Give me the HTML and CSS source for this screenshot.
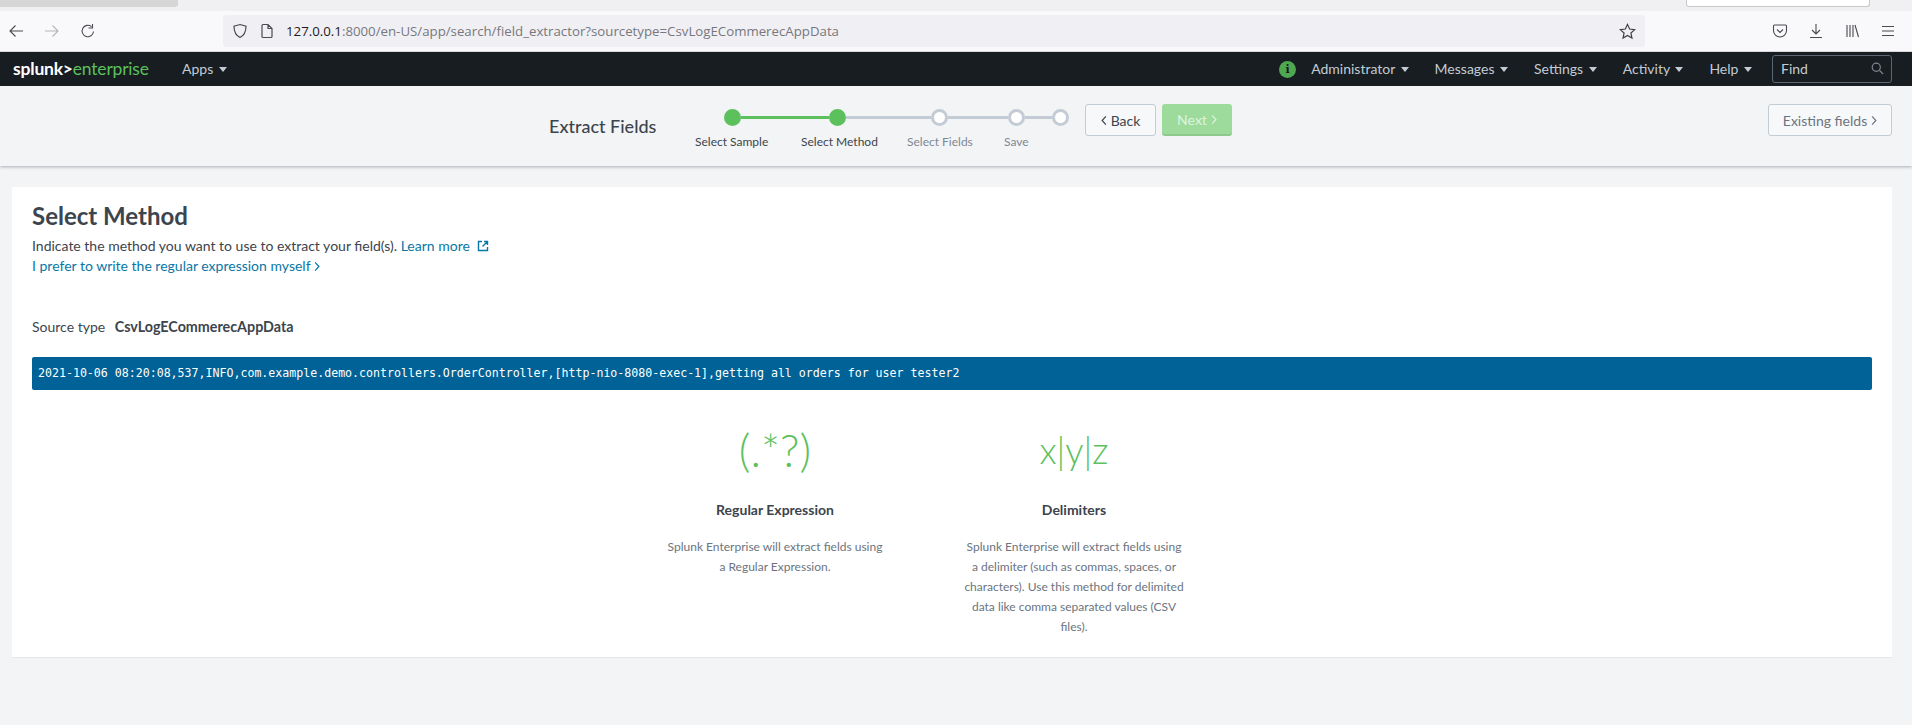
FILE: index.html
```html
<!DOCTYPE html>
<html lang="en">
<head>
    <meta charset="UTF-8">
    <meta name="viewport" content="width=device-width, initial-scale=1.0">
    <title>Extract Fields</title>
    <link rel="stylesheet" href="styles.css">
</head>
<body>
    <div class="tabstrip">
        <div class="tab-thumb"></div>
        <div class="tab-popup"></div>
    </div>
    <div class="toolbar">
        <svg class="tool-icon back" viewBox="0 0 16 16"><path d="M15 8H2M7.5 2.5 2 8l5.500 5.500"/></svg>
        <svg class="tool-icon forward" viewBox="0 0 16 16"><path d="M1 8h13M8.500 2.500 14 8l-5.500 5.500"/></svg>
        <svg class="tool-icon reload" viewBox="0 0 16 16"><path d="M13.500 8.500A5.700 5.700 0 1 1 11.500 3.600M12.500 1v4h-4"/></svg>
        <div class="urlbar">
            <svg class="url-icon" viewBox="0 0 16 16"><path d="M8 1.500 14 3.200c0 5.500-1.500 9-6 11.300C3.500 12.200 2 8.700 2 3.200z"/></svg>
            <svg class="url-icon page" viewBox="0 0 16 16"><path d="M3 2.500c0-.6.400-1 1-1h5l4 4v8c0 .6-.4 1-1 1H4c-.6 0-1-.4-1-1zM9 1.500v4h4"/></svg>
            <span class="url-text"><span class="url-host">127.0.0.1</span>:8000/en-US/app/search/field_extractor?sourcetype=CsvLogECommerecAppData</span>
            <svg class="url-star" viewBox="0 0 16 16"><path d="M8 1.300 10 5.700l4.800.5-3.600 3.200 1 4.800L8 11.800l-4.200 2.400 1-4.800L1.200 6.200 6 5.700z"/></svg>
        </div>
        <div class="tool-right">
            <svg class="tool-icon" viewBox="0 0 16 16"><path d="M2.500 2h11c.6 0 1 .4 1 1v4.500c0 3.500-3 6.500-6.500 6.500s-6.500-3-6.500-6.500V3c0-.6.400-1 1-1zM5 6.500l3 3 3-3"/></svg>
            <svg class="tool-icon" viewBox="0 0 16 16"><path d="M8 1v9.500M4 7l4 4 4-4M2 14.500h12"/></svg>
            <svg class="tool-icon" viewBox="0 0 16 16"><path d="M3 2v12M6 2v12M9 2v12M11 2l3.500 12"/></svg>
            <svg class="tool-icon" viewBox="0 0 16 16"><path d="M2 3.500h12M2 8h12M2 12.500h12"/></svg>
        </div>
    </div>

    <nav class="navbar">
        <div class="logo"><span class="logo-splunk">splunk&gt;</span><span class="logo-product">enterprise</span></div>
        <a class="nav-item nav-apps">Apps <i class="caret"></i></a>
        <div class="nav-right">
            <span class="info-dot">i</span>
            <a class="nav-item">Administrator <i class="caret"></i></a>
            <a class="nav-item">Messages <i class="caret"></i></a>
            <a class="nav-item">Settings <i class="caret"></i></a>
            <a class="nav-item">Activity <i class="caret"></i></a>
            <a class="nav-item">Help <i class="caret"></i></a>
            <div class="find">
                <span>Find</span>
                <svg class="find-icon" viewBox="0 0 16 16"><circle cx="6.500" cy="6.500" r="5"/><path d="M10.500 10.500 15 15"/></svg>
            </div>
        </div>
    </nav>

    <header class="wizard">
        <h1 class="wizard-title">Extract Fields</h1>
        <div class="stepper">
            <div class="step-track">
                <span class="dot done"></span><span class="line done-line l1"></span>
                <span class="dot done"></span><span class="line l2"></span>
                <span class="dot"></span><span class="line l3"></span>
                <span class="dot"></span><span class="line l4"></span>
                <span class="dot"></span>
            </div>
            <div class="step-labels">
                <span class="active s1">Select Sample</span>
                <span class="active s2">Select Method</span>
                <span class="s3">Select Fields</span>
                <span class="s4">Save</span>
            </div>
        </div>
        <button class="btn btn-back"><svg class="chev" viewBox="0 0 8 14"><path d="M6.500 1.500 1.500 7l5 5.500"/></svg> Back</button>
        <button class="btn btn-next">Next <svg class="chev" viewBox="0 0 8 14"><path d="M1.500 1.500 6.500 7l-5 5.500"/></svg></button>
        <button class="btn btn-existing">Existing fields <svg class="chev" viewBox="0 0 8 14"><path d="M1.500 1.500 6.500 7l-5 5.500"/></svg></button>
    </header>

    <main class="card">
        <h2 class="card-title">Select Method</h2>
        <p class="intro">Indicate the method you want to use to extract your field(s). <a>Learn more <svg class="ext" viewBox="0 0 12 12"><path d="M5 1.500H1.500v9h9V7M7 1.500h3.500V5M10.500 1.500 5.500 6.500"/></svg></a></p>
        <p class="intro"><a>I prefer to write the regular expression myself <svg class="chev-link" viewBox="0 0 8 14"><path d="M1.500 1.500 6.500 7l-5 5.500"/></svg></a></p>
        <p class="source">Source type <b>CsvLogECommerecAppData</b></p>
        <div class="sample">2021-10-06 08:20:08,537,INFO,com.example.demo.controllers.OrderController,[http-nio-8080-exec-1],getting all orders for user tester2</div>
        <div class="methods">
            <section class="method">
                <div class="method-icon regex">(.*?)</div>
                <h3>Regular Expression</h3>
                <p>Splunk Enterprise will extract fields using a Regular Expression.</p>
            </section>
            <section class="method">
                <div class="method-icon">x|y|z</div>
                <h3>Delimiters</h3>
                <p>Splunk Enterprise will extract fields using a delimiter (such as commas, spaces, or characters). Use this method for delimited data like comma separated values (CSV files).</p>
            </section>
        </div>
    </main>
</body>
</html>
```

FILE: styles.css
```css
* {
    box-sizing: border-box;
}
html, body {
    height: 725px;
    overflow: hidden;
}
body {
    margin: 0;
    background-color: #f2f4f5;
    font-family: Lato, "Open Sans", sans-serif;
    color: #3c444d;
}
.tabstrip {
    height: 11px;
    background-color: #f0f0f2;
    display: flex;
    justify-content: space-between;
    padding-right: 42px;
}
.tab-thumb {
    width: 178px;
    height: 7px;
    background-color: #d6d6d6;
    border-bottom-right-radius: 3px;
}
.tab-popup {
    width: 184px;
    height: 7px;
    background-color: white;
    border: 1px solid #c8c8c8;
    border-top: none;
    border-radius: 0 0 3px 3px;
}
.toolbar {
    height: 41px;
    background-color: #f9f9fb;
    display: flex;
    align-items: center;
    padding-left: 8px;
    border-bottom: 1px solid #d8d8dc;
}
.tool-icon {
    width: 16px;
    height: 16px;
    fill: none;
    stroke: #4a4a50;
    stroke-width: 1.1;
    flex: none;
}
.forward {
    margin-left: 20px;
    stroke: #b5b5b8;
}
.reload {
    margin-left: 20px;
}
.urlbar {
    margin-left: 127px;
    width: 1422px;
    height: 32px;
    background-color: #f0f0f4;
    border-radius: 4px;
    display: flex;
    align-items: center;
    padding-left: 9px;
    padding-right: 9px;
    font-family: "Open Sans", sans-serif;
    font-size: 13.250px;
}
.url-icon {
    width: 16px;
    height: 16px;
    fill: none;
    stroke: #4a4a50;
    stroke-width: 1.200;
    flex: none;
}
.url-icon.page {
    margin-left: 11px;
}
.url-text {
    margin-left: 11px;
    color: #77777d;
    flex: 1;
    white-space: nowrap;
}
.url-host {
    color: #1c1b22;
}
.url-star {
    width: 17px;
    height: 17px;
    fill: none;
    stroke: #3e3e44;
    stroke-width: 1.100;
    flex: none;
}
.tool-right {
    margin-left: 127px;
    display: flex;
    gap: 20px;
}
.navbar {
    height: 34px;
    background-color: #171d21;
    display: flex;
    align-items: center;
    padding-left: 13px;
    padding-right: 20px;
    font-size: 14px;
}
.logo {
    font-size: 17.500px;
    letter-spacing: -0.200px;
    width: 169px;
    flex: none;
    margin-top: -2px;
}
.logo-splunk {
    color: white;
    font-weight: 700;
}
.logo-product {
    color: #5cc05c;
}
.nav-item {
    color: #c3cbd4;
    white-space: nowrap;
    margin-top: -2px;
}
.caret {
    display: inline-block;
    width: 0;
    height: 0;
    margin-left: 2px;
    vertical-align: 2px;
    border-left: 4px solid transparent;
    border-right: 4px solid transparent;
    border-top: 5px solid #c3cbd4;
}
.nav-right {
    margin-left: auto;
    display: flex;
    align-items: center;
    gap: 26px;
}
.info-dot {
    width: 17px;
    height: 17px;
    border-radius: 50%;
    background-color: #4fa84f;
    color: #12181c;
    font-family: "DejaVu Serif", serif;
    font-weight: 700;
    font-size: 11px;
    line-height: 17px;
    text-align: center;
    margin-right: -11px;
}
.find {
    width: 120px;
    height: 28px;
    border: 1px solid #5c6773;
    border-radius: 3px;
    color: #c3cbd4;
    display: flex;
    align-items: center;
    justify-content: space-between;
    padding: 0 7px 2px 8px;
    margin-left: -6px;
}
.find-icon {
    width: 13px;
    height: 13px;
    fill: none;
    stroke: #7d8791;
    stroke-width: 1.500;
}
.wizard {
    height: 80px;
    background-color: #f2f4f5;
    box-shadow: 0 1px 3px rgba(60, 70, 85, 0.4);
    display: flex;
    align-items: flex-start;
    padding: 18px 20px 0 549px;
    position: relative;
}
.wizard-title {
    margin: 0;
    width: 175px;
    padding-top: 10px;
    font-size: 18px;
    font-weight: 500;
    line-height: 24px;
    color: #3c444d;
    white-space: nowrap;
}
.stepper {
    width: 361px;
    flex: none;
}
.step-track {
    display: flex;
    align-items: center;
    height: 18px;
    margin-top: 4px;
}
.dot {
    width: 17px;
    height: 17px;
    border-radius: 50%;
    background-color: white;
    border: 3px solid #c3cbd4;
    flex: none;
}
.dot.done {
    background-color: #5cc05c;
    border-color: #5cc05c;
}
.line {
    height: 3px;
    background-color: #c3cbd4;
    flex: none;
}
.line.done-line {
    background-color: #5cc05c;
}
.l1 {
    width: 88px;
}
.l2 {
    width: 85px;
}
.l3 {
    width: 60px;
}
.l4 {
    width: 27px;
}
.step-labels {
    display: flex;
    font-size: 12px;
    color: #7e8894;
    margin-top: 8px;
    margin-left: -29px;
    white-space: nowrap;
}
.step-labels .active {
    color: #3c444d;
}
.s1 {
    width: 106px;
}
.s2 {
    width: 106px;
}
.s3 {
    width: 97px;
}
.btn {
    height: 32px;
    border-radius: 3px;
    font-family: inherit;
    font-size: 14px;
    padding: 0;
    flex: none;
    display: flex;
    align-items: center;
    justify-content: center;
    gap: 4px;
    background-color: #f7f8fa;
    border: 1px solid #c3cbd4;
    color: #3c444d;
}
.btn-back {
    width: 71px;
}
.btn-next {
    width: 70px;
    margin-left: 6px;
    background-color: #9ddb9d;
    border: none;
    border-bottom: 2px solid #8dc98d;
    color: #def3de;
}
.btn-existing {
    width: 124px;
    margin-left: auto;
    color: #6b7480;
}
.chev {
    width: 6px;
    height: 11px;
    fill: none;
    stroke: currentColor;
    stroke-width: 1.600;
}
.card {
    margin: 21px 20px 0 12px;
    height: 471px;
    background-color: white;
    padding: 15px 20px 0 20px;
    border-bottom: 1px solid #e4e7ea;
}
.card-title {
    margin: 0 0 6px;
    font-size: 24px;
    line-height: 28px;
    font-weight: 700;
    color: #3c444d;
}
.intro {
    margin: 0;
    font-size: 14px;
    line-height: 20px;
    color: #3c444d;
}
.intro a {
    color: #0877a6;
}
.ext {
    width: 12px;
    height: 12px;
    margin-left: 4px;
    vertical-align: -1px;
    fill: none;
    stroke: #0877a6;
    stroke-width: 1.400;
}
.chev-link {
    width: 6px;
    height: 11px;
    vertical-align: -1px;
    fill: none;
    stroke: #0877a6;
    stroke-width: 1.600;
}
.source {
    margin: 41px 0 0;
    font-size: 14px;
    line-height: 20px;
}
.source b {
    margin-left: 6px;
    font-size: 14.300px;
}
.sample {
    margin-top: 20px;
    height: 33px;
    background-color: #006297;
    border-radius: 2px;
    color: white;
    font-family: "DejaVu Sans Mono", monospace;
    font-size: 11.600px;
    line-height: 33px;
    padding-left: 6px;
    white-space: nowrap;
}
.methods {
    display: flex;
    gap: 77px;
    margin-top: 38px;
    margin-left: 632px;
}
.method {
    width: 222px;
    text-align: center;
}
.method-icon {
    color: #5cc05c;
    font-size: 36.500px;
    font-weight: 300;
    line-height: 44px;
    white-space: nowrap;
}
.method-icon.regex {
    font-size: 45px;
}
.method h3 {
    margin: 28px 0 17px;
    font-size: 14px;
    line-height: 20px;
    font-weight: 700;
    color: #3c444d;
}
.method p {
    margin: 0;
    font-size: 12px;
    line-height: 20px;
    color: #6b7480;
}
```
